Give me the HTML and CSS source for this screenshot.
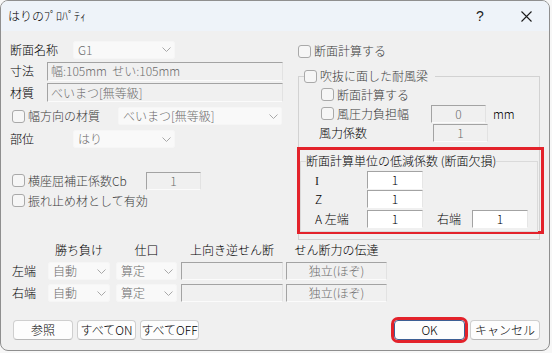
FILE: index.html
```html
<!DOCTYPE html>
<html lang="ja">
<head>
<meta charset="utf-8">
<link rel="stylesheet" href="styles.css">
</head>
<body>
<div class="win">
  <div class="titlebar">
    <span class="title">はりのﾌﾟﾛﾊﾟﾃｨ</span>
    <div class="tbtns">
      <span class="tbtn help">?</span>
      <span class="tbtn close"><svg width="11" height="11" viewBox="0 0 11 11"><path d="M0.5 0.5 L10.5 10.5 M10.5 0.5 L0.5 10.5" stroke="#1b1b1b" stroke-width="1.1" fill="none"/></svg></span>
    </div>
  </div>
  <div class="content">
    <div class="main">
      <div class="left">
        <div class="row r1"><span class="lbl w63">断面名称</span><div class="combo w102"><span class="ctext">G1</span><svg class="chev" width="9" height="5" viewBox="0 0 9 5"><path d="M0.5 0.5 L4.5 4.5 L8.5 0.5" fill="none" stroke="#a8a8a8"/></svg></div></div>
        <div class="row r2"><span class="lbl w37">寸法</span><div class="tbox w236">幅:105mm&nbsp;&nbsp;せい:105mm</div></div>
        <div class="row r3"><span class="lbl w37">材質</span><div class="tbox w236">べいまつ[無等級]</div></div>
        <div class="row r4"><span class="cbl w108"><span class="cb"></span><span class="ct">幅方向の材質</span></span><div class="combo w164"><span class="ctext">べいまつ[無等級]</span><svg class="chev" width="9" height="5" viewBox="0 0 9 5"><path d="M0.5 0.5 L4.5 4.5 L8.5 0.5" fill="none" stroke="#a8a8a8"/></svg></div></div>
        <div class="row r5"><span class="lbl w63">部位</span><div class="combo w102"><span class="ctext">はり</span><svg class="chev" width="9" height="5" viewBox="0 0 9 5"><path d="M0.5 0.5 L4.5 4.5 L8.5 0.5" fill="none" stroke="#a8a8a8"/></svg></div></div>
        <div class="row r6"><span class="cbl w136"><span class="cb"></span><span class="ct">横座屈補正係数Cb</span></span><div class="tbox num w55">1</div></div>
        <div class="row r7"><span class="cbl"><span class="cb"></span><span class="ct">振れ止め材として有効</span></span></div>
      </div>
      <div class="right">
        <div class="row rt"><span class="cbl"><span class="cb"></span><span class="ct">断面計算する</span></span></div>
        <fieldset class="outer">
          <legend class="olg"><span class="cbl"><span class="cb"></span><span class="ct">吹抜に面した耐風梁</span></span></legend>
          <div class="row o1"><span class="cbl"><span class="cb"></span><span class="ct">断面計算する</span></span></div>
          <div class="row o2"><span class="cbl w112"><span class="cb"></span><span class="ct">風圧力負担幅</span></span><div class="tbox num w55">0</div><span class="unit">mm</span></div>
          <div class="row o3"><span class="lbl w114">風力係数</span><div class="tbox num w55">1</div></div>
          <div class="redbox">
            <fieldset class="inner">
              <legend class="ilg">断面計算単位の低減係数 (断面欠損)</legend>
              <div class="row i1"><span class="lbl w52"><span class="serif">I</span></span><div class="ebox w56">1</div></div>
              <div class="row i2"><span class="lbl w52">Z</span><div class="ebox w56">1</div></div>
              <div class="row i3"><span class="lbl w52">A 左端</span><div class="ebox w56">1</div><span class="lbl w35 ml14">右端</span><div class="ebox w56">1</div></div>
            </fieldset>
          </div>
        </fieldset>
      </div>
    </div>
    <div class="table">
      <div class="trow th">
        <span class="c0"></span>
        <span class="c1 hd">勝ち負け</span>
        <span class="c2 hd">仕口</span>
        <span class="c3 hd">上向き逆せん断</span>
        <span class="c4 hd">せん断力の伝達</span>
      </div>
      <div class="trow tr1">
        <span class="c0 lbl">左端</span>
        <div class="c1 combo"><span class="ctext">自動</span><svg class="chev" width="9" height="5" viewBox="0 0 9 5"><path d="M0.5 0.5 L4.5 4.5 L8.5 0.5" fill="none" stroke="#a8a8a8"/></svg></div>
        <div class="c2 combo"><span class="ctext">算定</span><svg class="chev" width="9" height="5" viewBox="0 0 9 5"><path d="M0.5 0.5 L4.5 4.5 L8.5 0.5" fill="none" stroke="#a8a8a8"/></svg></div>
        <div class="c3 tbox"></div>
        <div class="c4 tbox num">独立(ほぞ)</div>
      </div>
      <div class="trow tr2">
        <span class="c0 lbl">右端</span>
        <div class="c1 combo"><span class="ctext">自動</span><svg class="chev" width="9" height="5" viewBox="0 0 9 5"><path d="M0.5 0.5 L4.5 4.5 L8.5 0.5" fill="none" stroke="#a8a8a8"/></svg></div>
        <div class="c2 combo"><span class="ctext">算定</span><svg class="chev" width="9" height="5" viewBox="0 0 9 5"><path d="M0.5 0.5 L4.5 4.5 L8.5 0.5" fill="none" stroke="#a8a8a8"/></svg></div>
        <div class="c3 tbox"></div>
        <div class="c4 tbox num">独立(ほぞ)</div>
      </div>
    </div>
    <div class="buttons">
      <div class="bgroup">
        <button class="btn b60">参照</button>
        <button class="btn b59">すべてON</button>
        <button class="btn b59">すべてOFF</button>
      </div>
      <div class="bgroup r">
        <button class="btn ok">OK</button>
        <button class="btn b70">キャンセル</button>
      </div>
    </div>
  </div>
</div>
</body>
</html>
```

FILE: styles.css
```css
* { box-sizing: border-box; }
html, body { margin: 0; padding: 0; }
body {
  background: #f7f7f7;
  font-family: "Noto Sans CJK JP", "Noto Sans", sans-serif;
  font-size: 12px;
  font-weight: 300;
  line-height: 16px;
  color: #000;
}
.win {
  width: 550px;
  height: 351px;
  border: 1px solid #8f8f8f;
  border-radius: 8px;
  background: #f0f0f0;
  overflow: hidden;
}
.titlebar {
  height: 30px;
  background: #eef3f9;
  display: flex;
  align-items: center;
  justify-content: space-between;
}
.title { padding-left: 7px; line-height: 30px; color: #000; }
.tbtns { display: flex; height: 30px; }
.tbtn {
  width: 46px;
  height: 30px;
  display: flex;
  align-items: center;
  justify-content: center;
}
.help { font-family: "Liberation Sans", sans-serif; font-size: 14px; font-weight: 400; color: #1b1b1b; }
.content { display: flex; flex-direction: column; }
.main { display: flex; height: 209px; }
.left { width: 288px; padding-left: 9px; padding-top: 9px; display: flex; flex-direction: column; }
.right { width: 251px; margin-left: 8px; display: flex; flex-direction: column; }
.row { display: flex; align-items: center; flex-shrink: 0; }
.lbl { flex-shrink: 0; white-space: nowrap; }
.serif { font-family: "Liberation Serif", serif; font-size: 12px; font-weight: 400; color: #222; }
.w37 { width: 37px; } .w52 { width: 52px; } .w35 { width: 35px; }
.w63 { width: 63px; } .w108 { width: 108px; } .w112 { width: 112px; }
.w114 { width: 114px; } .w136 { width: 136px; }
.ml14 { margin-left: 14px; }
.r1 { height: 19px; }
.r2 { height: 18px; margin-top: 3px; }
.r3 { height: 19px; margin-top: 3px; }
.r4 { height: 18px; margin-top: 5px; }
.r5 { height: 18px; margin-top: 5px; }
.r6 { height: 17px; margin-top: 24px; }
.r7 { height: 17px; margin-top: 3px; }

.combo {
  height: 18px;
  background: #f9f9f9;
  border: 1px solid #f6f6f6;
  border-radius: 2px;
  display: flex;
  align-items: center;
  justify-content: space-between;
  padding: 0 3px 0 4px;
  color: #6d6d6d;
}
.combo .ctext { white-space: nowrap; }
.chev { flex-shrink: 0; }
.w102 { width: 102px; } .w164 { width: 164px; }
.tbox {
  height: 18px;
  border: 1px solid;
  border-color: #a3a3a3 #e2e2e2 #fbfbfb #a3a3a3;
  background: #f0f0f0;
  color: #6d6d6d;
  padding-left: 3px;
  display: flex;
  align-items: center;
  white-space: nowrap;
}
.r2 .tbox, .r3 .tbox { height: 19px; }
.tbox.num { justify-content: center; padding-left: 0; }
.w236 { width: 236px; } .w55 { width: 55px; } .w56 { width: 56px; }
.ebox {
  height: 18px;
  border: 1px solid;
  border-color: #a3a3a3 #e6e6e6 #ffffff #a3a3a3;
  background: #fff;
  display: flex;
  align-items: center;
  justify-content: center;
  color: #000;
}
.cbl { display: flex; align-items: center; flex-shrink: 0; white-space: nowrap; }
.cb {
  width: 13px;
  height: 13px;
  border: 1px solid #a9a9a9;
  border-radius: 3px;
  background: #f6f6f6;
  margin-left: 2px;
  flex-shrink: 0;
}
.ct { margin-left: 3px; color: #3c3c3c; }

/* right column */
.rt { height: 18px; margin-top: 11px; }
.rt .cb { margin-left: 1px; }
fieldset { margin: 0; padding: 0; min-width: 0; border: 1px solid #d2d2d2; }
.outer { margin: 8px 0 0 1px; width: 242px; padding-bottom: 5px; }
.olg { margin-left: 5px; padding: 0; width: 131px; height: 16px; display: flex; align-items: center; }
.olg .cb { margin-left: 0; }
.o1 { height: 17px; margin-top: 2px; padding-left: 20px; }
.o2 { height: 17px; margin-top: 2px; padding-left: 20px; }
.o3 { height: 17px; margin-top: 2px; padding-left: 20px; }
.o3 .lbl { width: 114px; }
.unit { margin-left: 7px; }
.redbox {
  margin: 6px 0 0 -2px;
  width: 247px;
  height: 87px;
  border: 3px solid #e3222b;
}
.inner { margin-top: 3px; width: 238px; padding-bottom: 3px; border-color: #dadada; }
.ilg { margin-left: 5px; padding: 0; height: 16px; line-height: 16px; white-space: nowrap; }
.i1 { height: 18px; margin-top: 2px; padding-left: 14px; }
.i2 { height: 18px; margin-top: 1px; padding-left: 14px; }
.i3 { height: 18px; margin-top: 2px; padding-left: 14px; }

/* table */
.table { padding-left: 9px; display: flex; flex-direction: column; }
.trow { display: flex; align-items: center; }
.th { height: 16px; margin-top: 2px; }
.tr1, .tr2 { height: 19px; margin-top: 3px; }
.c0 { width: 38px; padding-left: 2px; flex-shrink: 0; }
.c1 { width: 62px; flex-shrink: 0; }
.c2 { width: 61px; margin-left: 6px; flex-shrink: 0; }
.c3 { width: 102px; margin-left: 4px; flex-shrink: 0; }
.c4 { width: 101px; margin-left: 3px; flex-shrink: 0; }
.hd { text-align: center; white-space: nowrap; }
.trow .combo { margin-top: 1px; }

/* buttons */
.buttons {
  display: flex;
  justify-content: space-between;
  margin-top: 18px;
  padding: 0 9px 0 12px;
}
.bgroup { display: flex; gap: 4px; }
.bgroup.r { gap: 5px; }
.btn {
  height: 20px;
  padding: 0;
  font-family: "Noto Sans CJK JP", sans-serif;
  font-size: 12px;
  font-weight: 300;
  line-height: 16px;
  color: #000;
  background: #fdfdfd;
  border: 1px solid #cfcfcf;
  border-bottom-color: #b9b9b9;
  border-radius: 4px;
}
.b60 { width: 60px; } .b59 { width: 59px; } .b70 { width: 70px; }
.ok {
  width: 71px;
  border: 1px solid #3d5f94;
  outline: 3px solid #e3222b;
  outline-offset: 0;
}
```
